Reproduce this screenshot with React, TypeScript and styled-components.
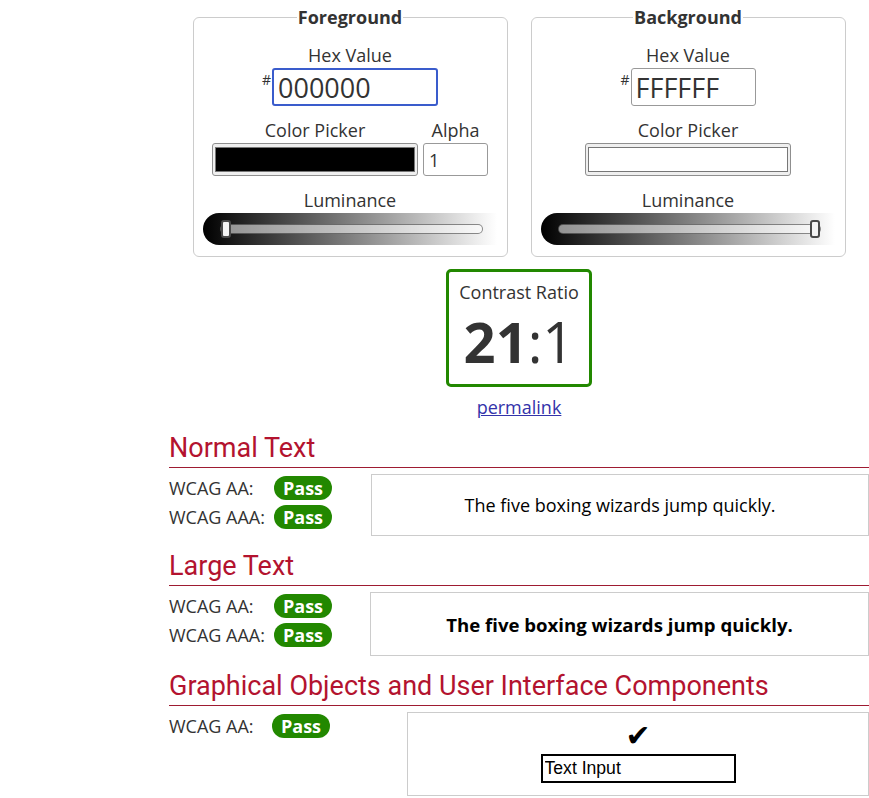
import React from "react";
import styled, { createGlobalStyle } from "styled-components";

const Global = createGlobalStyle`
  html, body { margin: 0; padding: 0; background: #fff; }
  body {
    font-family: "Open Sans", "Liberation Sans", sans-serif;
    color: #333;
    font-size: 18px;
  }
`;

const Page = styled.main`
  width: 700px;
  margin-left: 169px;
  padding-top: 5px;
`;

const Pickers = styled.div`
  display: flex;
  justify-content: center;
  gap: 23px;
`;

const Fieldset = styled.fieldset`
  width: 315px;
  box-sizing: border-box;
  min-width: 0;
  margin: 0;
  border: 1px solid #ccc;
  border-radius: 6px;
  padding: 13px 8px 11px;
  display: flex;
  flex-direction: column;
  align-items: center;
`;

const Legend = styled.legend`
  margin: 0 auto;
  padding: 0 1px;
  font-weight: 700;
  font-size: 18px;
  line-height: 25px;
  color: #333;
`;

const Label = styled.div`
  font-size: 18px;
  line-height: 25px;
  text-align: center;
  color: #333;
`;

const HexRow = styled.div`
  display: flex;
  align-items: flex-start;
  margin-bottom: 12px;
`;

const Hash = styled.span`
  font-size: 14px;
  line-height: 1;
  margin-top: 5px;
  margin-right: 1px;
`;

const HexInput = styled.input<{ $w: number; $focused?: boolean }>`
  width: ${(p) => p.$w}px;
  height: 38px;
  box-sizing: border-box;
  margin: 0;
  padding: 0 4px;
  border: ${(p) => (p.$focused ? "2px solid #3a5ccc" : "1px solid #999")};
  border-radius: 3px;
  font-family: "Open Sans", sans-serif;
  font-size: 27px;
  color: #333;
  outline: none;
  background: #fff;
`;

const PickRow = styled.div`
  display: flex;
  gap: 5px;
  margin-bottom: 12px;
`;

const PickGroup = styled.div`
  display: flex;
  flex-direction: column;
  align-items: center;
`;

const Swatch = styled.div<{ $w: number }>`
  width: ${(p) => p.$w}px;
  height: 33px;
  box-sizing: border-box;
  border: 1px solid #8f8f8f;
  border-radius: 3px;
  background: #efefef;
  padding: 3px 2px;
  display: flex;
`;

const SwatchFill = styled.div<{ $c: string }>`
  flex: 1;
  background: ${(p) => p.$c};
  border: 1px solid #777;
`;

const AlphaInput = styled.input`
  width: 65px;
  height: 33px;
  box-sizing: border-box;
  margin: 0;
  padding: 0 5px;
  border: 1px solid #999;
  border-radius: 3px;
  font-family: "Open Sans", sans-serif;
  font-size: 18px;
  color: #333;
  background: #fff;
`;

const SliderBar = styled.div`
  width: 294px;
  height: 32px;
  border-radius: 16px 0 0 16px;
  background: linear-gradient(to right, #000 0%, #fff 100%);
  display: flex;
  align-items: center;
  padding-left: 17px;
  box-sizing: border-box;
`;

const Track = styled.div`
  position: relative;
  width: 263px;
  height: 10px;
  box-sizing: border-box;
  border: 1px solid rgba(0, 0, 0, 0.45);
  border-radius: 5px;
  background: rgba(255, 255, 255, 0.55);
`;

const Thumb = styled.div`
  position: absolute;
  top: -5px;
  width: 10px;
  height: 18px;
  box-sizing: border-box;
  border: 2px solid #4a4a4a;
  border-radius: 3px;
  background: #f4f4f4;
`;

const ContrastBox = styled.div`
  width: 146px;
  height: 118px;
  box-sizing: border-box;
  margin: 12px auto 0;
  border: 3px solid #228800;
  border-radius: 5px;
  text-align: center;
  padding-top: 8px;
`;

const Ratio = styled.div`
  font-size: 56px;
  line-height: 66px;
  color: #333;
  margin-top: 3px;
  b { font-weight: 700; }
`;

const Permalink = styled.a`
  display: block;
  width: max-content;
  margin: 8px auto 0;
  font-size: 18px;
  line-height: 25px;
  color: #3333aa;
  text-decoration: underline;
`;

const Section = styled.section<{ $top: number }>`
  margin-top: ${(p) => p.$top}px;
`;

const Heading = styled.h2`
  margin: 0;
  font-family: Roboto, "Liberation Sans", sans-serif;
  font-weight: 400;
  font-size: 27px;
  line-height: 32px;
  color: #b3132f;
  padding-bottom: 3px;
  border-bottom: 1px solid #9e1b32;
`;

const Results = styled.div<{ $left: number }>`
  display: grid;
  grid-template-columns: ${(p) => p.$left}px 1fr;
  margin-top: 6px;
`;

const Checks = styled.div`
  display: flex;
  flex-direction: column;
  gap: 1px;
`;

const CheckRow = styled.div<{ $label: number }>`
  display: flex;
  align-items: center;
  height: 28px;
  span:first-child {
    width: ${(p) => p.$label}px;
    font-size: 18px;
    color: #333;
  }
`;

const Badge = styled.span`
  width: 58px;
  height: 24px;
  border-radius: 12px;
  background: #228800;
  color: #fff;
  font-weight: 700;
  font-size: 18px;
  line-height: 24px;
  text-align: center;
`;

const Sample = styled.div<{ $h: number; $bold?: boolean }>`
  height: ${(p) => p.$h}px;
  box-sizing: border-box;
  border: 1px solid #ccc;
  display: flex;
  align-items: center;
  justify-content: center;
  color: #000;
  font-size: ${(p) => (p.$bold ? "18.6px" : "18px")};
  font-weight: ${(p) => (p.$bold ? 700 : 400)};
`;

const UiSample = styled.div`
  height: 84px;
  box-sizing: border-box;
  border: 1px solid #ccc;
  display: flex;
  flex-direction: column;
  align-items: center;
  padding-top: 8px;
`;

const CheckMark = styled.span`
  font-family: "DejaVu Sans", sans-serif;
  font-size: 30px;
  line-height: 30px;
  color: #000;
`;

const TextInput = styled.input`
  width: 195px;
  height: 29px;
  box-sizing: border-box;
  margin: 3px 0 0;
  padding: 0 2px;
  border: 2px solid #000;
  font-family: "Liberation Sans", Arial, sans-serif;
  font-size: 17.6px;
  color: #000;
  background: #fff;
`;

function Luminance({ value }: { value: number }) {
  return (
    <SliderBar>
      <Track>
        <Thumb style={{ left: `${value * 251}px` }} />
      </Track>
    </SliderBar>
  );
}

function Check({ label, width }: { label: string; width: number }) {
  return (
    <CheckRow $label={width}>
      <span>{label}</span>
      <Badge>Pass</Badge>
    </CheckRow>
  );
}

export default function App() {
  return (
    <>
      <Global />
      <Page>
        <Pickers>
          <Fieldset>
            <Legend>Foreground</Legend>
            <Label>Hex Value</Label>
            <HexRow>
              <Hash>#</Hash>
              <HexInput $w={166} $focused defaultValue="000000" />
            </HexRow>
            <PickRow>
              <PickGroup>
                <Label>Color Picker</Label>
                <Swatch $w={206}>
                  <SwatchFill $c="#000" />
                </Swatch>
              </PickGroup>
              <PickGroup>
                <Label>Alpha</Label>
                <AlphaInput defaultValue="1" />
              </PickGroup>
            </PickRow>
            <Label>Luminance</Label>
            <Luminance value={0} />
          </Fieldset>
          <Fieldset>
            <Legend>Background</Legend>
            <Label>Hex Value</Label>
            <HexRow>
              <Hash>#</Hash>
              <HexInput $w={125} defaultValue="FFFFFF" />
            </HexRow>
            <PickRow>
              <PickGroup>
                <Label>Color Picker</Label>
                <Swatch $w={206}>
                  <SwatchFill $c="#fff" />
                </Swatch>
              </PickGroup>
            </PickRow>
            <Label>Luminance</Label>
            <Luminance value={1} />
          </Fieldset>
        </Pickers>

        <ContrastBox>
          <Label>Contrast Ratio</Label>
          <Ratio>
            <b>21</b>:1
          </Ratio>
        </ContrastBox>
        <Permalink href="#">permalink</Permalink>

        <Section $top={12}>
          <Heading>Normal Text</Heading>
          <Results $left={202}>
            <Checks>
              <Check label="WCAG AA:" width={105} />
              <Check label="WCAG AAA:" width={105} />
            </Checks>
            <Sample $h={62}>The five boxing wizards jump quickly.</Sample>
          </Results>
        </Section>

        <Section $top={14}>
          <Heading>Large Text</Heading>
          <Results $left={201}>
            <Checks>
              <Check label="WCAG AA:" width={105} />
              <Check label="WCAG AAA:" width={105} />
            </Checks>
            <Sample $h={64} $bold>
              The five boxing wizards jump quickly.
            </Sample>
          </Results>
        </Section>

        <Section $top={14}>
          <Heading>Graphical Objects and User Interface Components</Heading>
          <Results $left={238}>
            <Checks>
              <Check label="WCAG AA:" width={103} />
            </Checks>
            <UiSample>
              <CheckMark>✔</CheckMark>
              <TextInput defaultValue="Text Input" />
            </UiSample>
          </Results>
        </Section>
      </Page>
    </>
  );
}
